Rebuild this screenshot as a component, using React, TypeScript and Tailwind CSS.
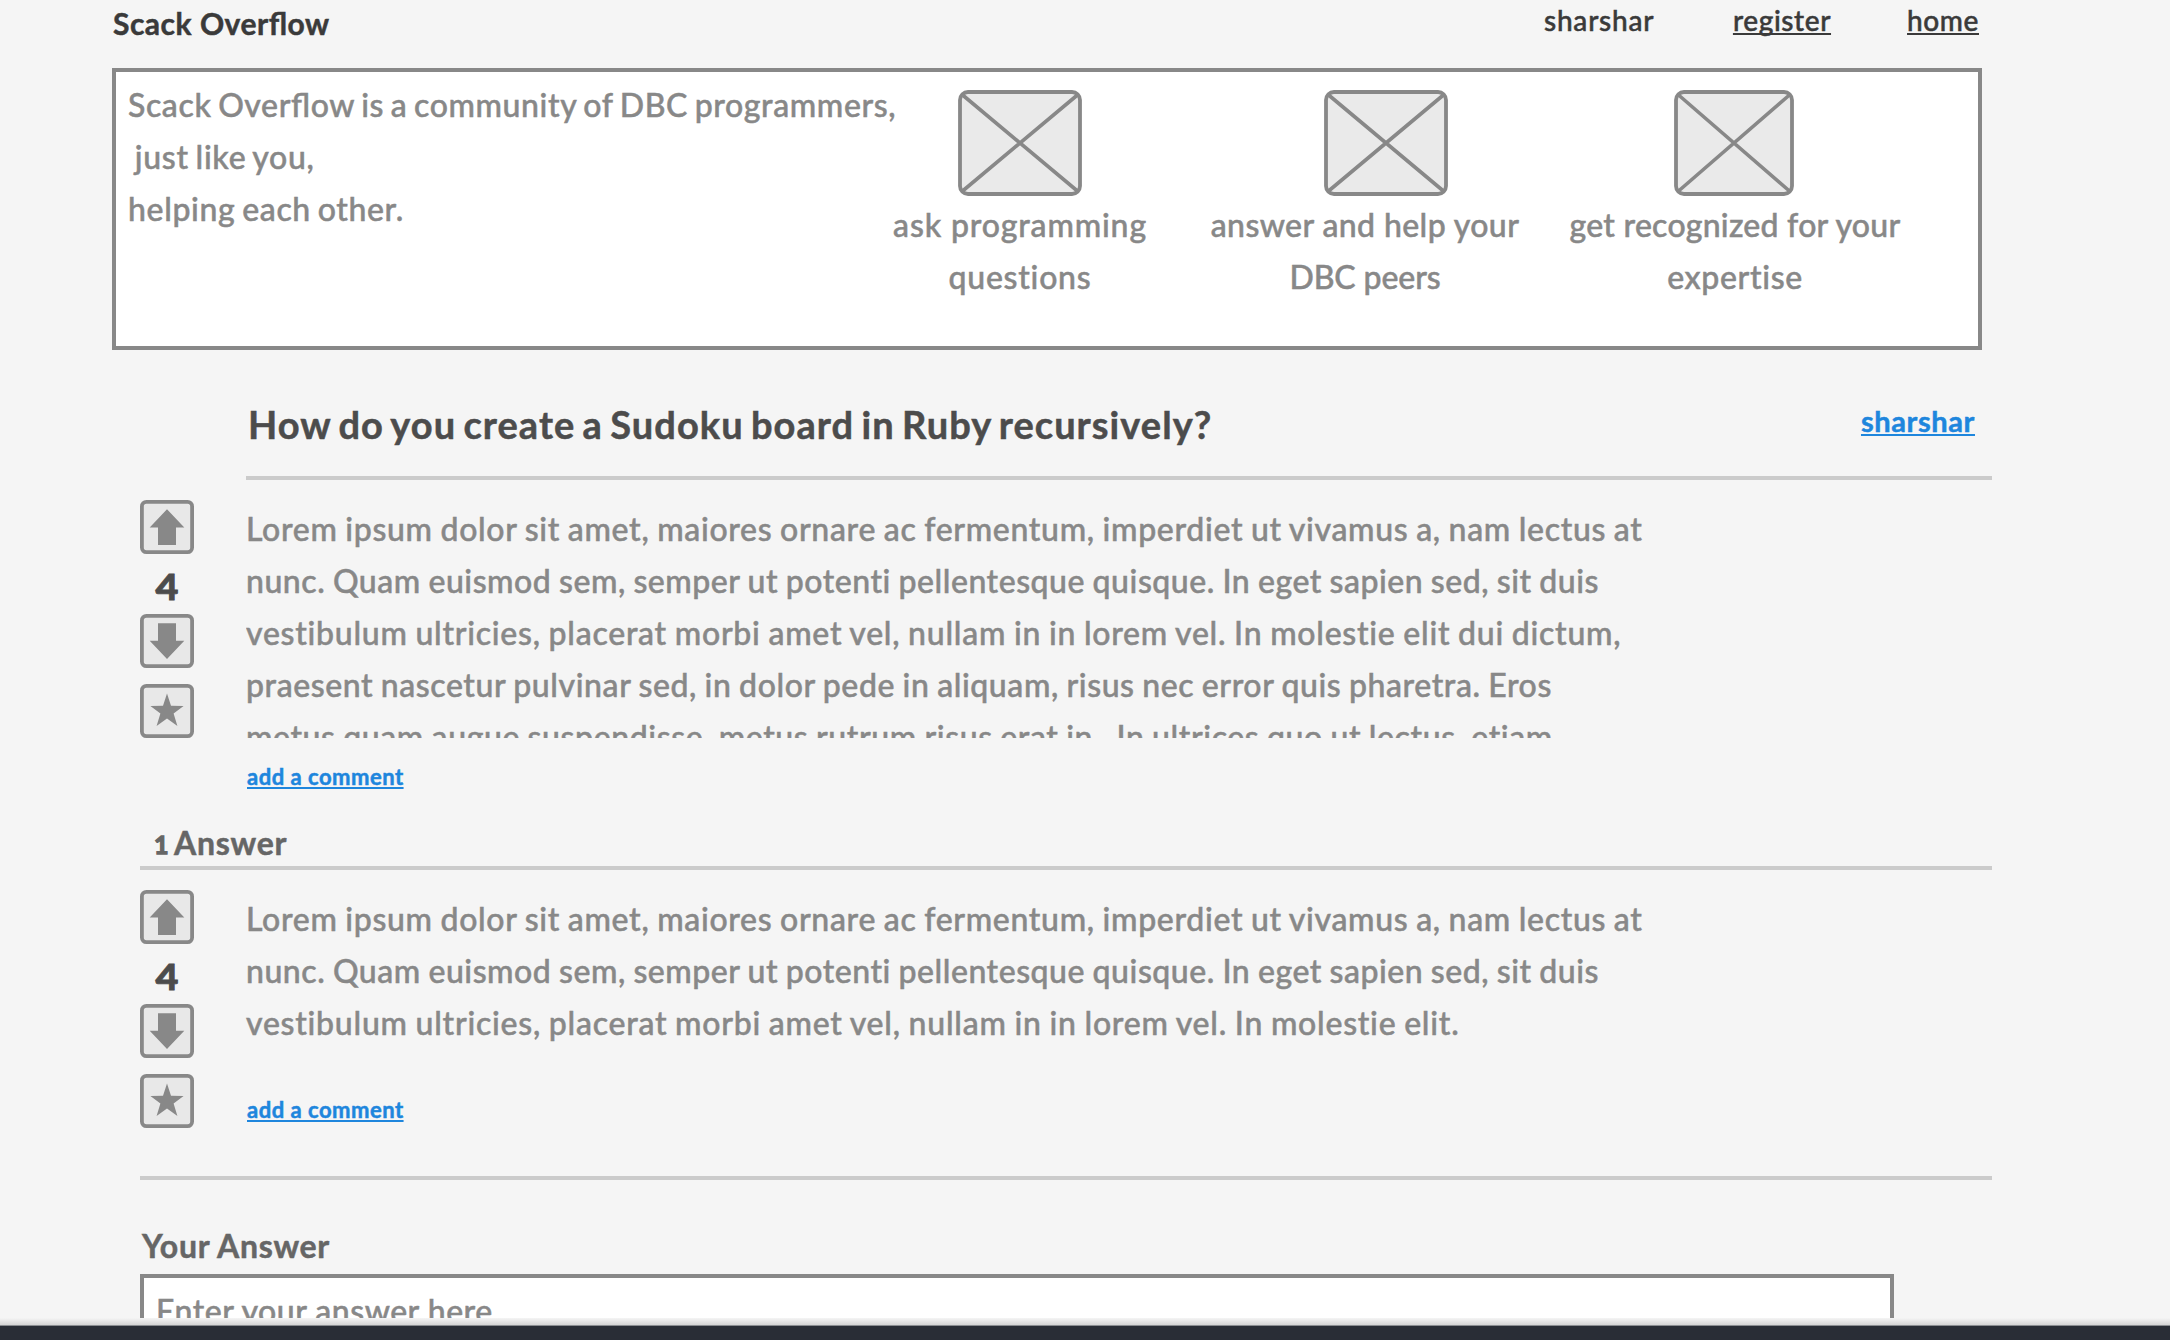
import type { ReactNode } from "react";

type Line = { text: string; spacing: string };

const questionLines: Line[] = [
  { text: "Lorem ipsum dolor sit amet, maiores ornare ac fermentum, imperdiet ut vivamus a, nam lectus at", spacing: "tracking-[0.68px]" },
  { text: "nunc. Quam euismod sem, semper ut potenti pellentesque quisque. In eget sapien sed, sit duis", spacing: "tracking-[0.54px]" },
  { text: "vestibulum ultricies, placerat morbi amet vel, nullam in in lorem vel. In molestie elit dui dictum,", spacing: "tracking-[0.74px]" },
  { text: "praesent nascetur pulvinar sed, in dolor pede in aliquam, risus nec error quis pharetra. Eros", spacing: "tracking-[0.58px]" },
  { text: "metus quam augue suspendisse, metus rutrum risus erat in.  In ultrices quo ut lectus, etiam", spacing: "tracking-[0.59px]" },
];

const answerLines: Line[] = [
  questionLines[0],
  questionLines[1],
  { text: "vestibulum ultricies, placerat morbi amet vel, nullam in in lorem vel. In molestie elit.", spacing: "tracking-[0.75px]" },
];

function Lines({ lines }: { lines: Line[] }) {
  return (
    <>
      {lines.map((l) => (
        <p key={l.text} className={`whitespace-pre ${l.spacing}`}>
          {l.text}
        </p>
      ))}
    </>
  );
}

function Placeholder({ width, className = "" }: { width: number; className?: string }) {
  const r = width - 2;
  return (
    <svg width={width} height="106" viewBox={`0 0 ${width} 106`} className={className} fill="none" stroke="#888888" strokeWidth="3.8">
      <rect x="2" y="2" width={width - 4} height="102" rx="8" fill="#eaeaea" />
      <path d={`M4 4.5 L${r - 2} 101.5 M${r - 2} 4.5 L4 101.5`} strokeWidth="3.6" />
    </svg>
  );
}

function Feature({ width, imageWidth, imageClass, lines }: { width: string; imageWidth: number; imageClass?: string; lines: Line[] }) {
  return (
    <div className={`flex shrink-0 flex-col items-center pt-[18px] whitespace-nowrap ${width}`}>
      <Placeholder width={imageWidth} className={imageClass} />
      <div className="mt-[3px] text-center">
        <Lines lines={lines} />
      </div>
    </div>
  );
}

function IconBox({ label, children }: { label: string; children: ReactNode }) {
  return (
    <button aria-label={label} className="block">
      <svg width="54" height="54" viewBox="0 0 54 54">
        <rect x="1.9" y="1.9" width="50.2" height="50.2" rx="4.5" fill="#e8e8e8" stroke="#888888" strokeWidth="3.8" />
        <g fill="#888888">{children}</g>
      </svg>
    </button>
  );
}

function Votes() {
  return (
    <div className="mt-5 flex w-[54px] shrink-0 flex-col">
      <IconBox label="Vote up">
        <path d="M27 9.2 L44.3 27.5 H36 V45 H18 V27.5 H9.7 Z" />
      </IconBox>
      <span className="h-[60px] scale-x-110 pt-[6px] text-center text-[36px] leading-[52px] font-black text-[#4c4c4c] [-webkit-text-stroke:0.8px]">4</span>
      <IconBox label="Vote down">
        <path d="M27 45 L44.3 26.8 H36 V9.2 H18 V26.8 H9.7 Z" />
      </IconBox>
      <div className="mt-4">
        <IconBox label="Favorite">
          <path d="M27 9.5 L31 21.7 L43.6 22 L33.6 29.6 L37.4 42 L27 34.6 L16.6 42 L20.4 29.6 L10.4 22 L23 21.7 Z" />
        </IconBox>
      </div>
    </div>
  );
}

const linkClass = "text-[#1e86dd] font-bold underline decoration-2 [text-decoration-skip-ink:none]";
const navLink = "underline decoration-2 underline-offset-[2px] [text-decoration-skip-ink:none]";

export default function App() {
  return (
    <div className="flex h-[1340px] w-[2170px] flex-col overflow-hidden bg-[#f5f5f5] font-[Lato,sans-serif] text-[32px] leading-[52px] font-medium text-[#888888] [-webkit-text-stroke:0.5px]">
      <div className="flex h-[1318px] shrink-0 flex-col overflow-hidden">
        <header className="ml-[113px] flex h-[68px] w-[1869px] shrink-0 justify-between text-[#3a3a3a]">
          <h1 className="pt-[5px] text-[30px] leading-9 font-bold tracking-[0.5px] [font-feature-settings:'liga']">Scack Overflow</h1>
          <nav className="flex pt-[2px] pr-[3px] text-[28px] leading-9">
            <span className="w-[189px] tracking-[0.8px]">sharshar</span>
            <a className="mr-[76px] tracking-[0.6px]"><span className={navLink}>register</span></a>
            <a className="tracking-[0.6px]"><span className={navLink}>home</span></a>
          </nav>
        </header>

        <section className="ml-[112px] flex h-[282px] w-[1870px] shrink-0 border-4 border-[#888888] bg-white">
          <div className="w-[764px] shrink-0 pt-[7px] pl-[12px] [font-feature-settings:'liga'] [word-spacing:-2px]">
            <Lines
              lines={[
                { text: "Scack Overflow is a community of DBC programmers,", spacing: "tracking-[0.61px]" },
                { text: " just like you,", spacing: "tracking-[0.7px]" },
                { text: "helping each other.", spacing: "tracking-[0.65px]" },
              ]}
            />
          </div>
          <Feature
            width="w-[280px]"
            imageWidth={124}
            lines={[
              { text: "ask programming", spacing: "tracking-[0.85px]" },
              { text: "questions", spacing: "tracking-[0.75px]" },
            ]}
          />
          <Feature
            width="w-[410px]"
            imageWidth={124}
            imageClass="relative left-[21px]"
            lines={[
              { text: "answer and help your", spacing: "tracking-[0.4px]" },
              { text: "DBC peers", spacing: "tracking-[-0.1px]" },
            ]}
          />
          <Feature
            width="w-[330px]"
            imageWidth={120}
            imageClass="relative -left-px"
            lines={[
              { text: "get recognized for your", spacing: "tracking-[0.25px]" },
              { text: "expertise", spacing: "tracking-[0.65px]" },
            ]}
          />
        </section>

        <div className="ml-[246px] flex h-[130px] w-[1746px] shrink-0 justify-between border-b-4 border-[#cbcbcb] pr-[17px] pl-[2px]">
          <h2 className="pt-[50px] text-[38px] leading-[48px] font-bold tracking-[1.06px] text-[#4c4c4c] [word-spacing:-3px]">
            How do you create a Sudoku board in Ruby recursively?
          </h2>
          <a className={`pt-[53px] text-[29px] leading-9 tracking-[0.6px] underline-offset-[2px] ${linkClass}`}>sharshar</a>
        </div>

        <section className="ml-[140px] flex h-[311px] shrink-0">
          <Votes />
          <div className="ml-[52px] flex flex-col">
            <div className="mt-[22px] h-[236px] shrink-0 overflow-hidden pt-px [word-spacing:-1px]">
              <Lines lines={questionLines} />
            </div>
            <a className={`mt-[25px] ml-px text-[22px] leading-7 tracking-[0.5px] underline-offset-[2px] ${linkClass}`}>add a comment</a>
          </div>
        </section>

        <h3 className="ml-[140px] flex h-[79px] w-[1852px] shrink-0 items-end border-b-4 border-[#cbcbcb] pb-[3px] pl-[14px] leading-10 font-bold tracking-[0.75px] text-[#666666]">
          <span className="w-5 text-[25px] leading-[38px] [-webkit-text-stroke:1.3px]">1</span>
          Answer
        </h3>

        <section className="ml-[140px] flex h-[310px] w-[1852px] shrink-0 border-b-4 border-[#cbcbcb]">
          <Votes />
          <div className="ml-[52px] flex flex-col">
            <div className="mt-[23px] [word-spacing:-1px]">
              <Lines lines={answerLines} />
            </div>
            <a className={`mt-[47px] ml-px text-[22px] leading-7 tracking-[0.5px] underline-offset-[2px] ${linkClass}`}>add a comment</a>
          </div>
        </section>

        <h3 className="mt-[46px] ml-[142px] h-[48px] shrink-0 leading-10 font-bold tracking-[0.7px] text-[#666666]">Your Answer</h3>
        <div className="ml-[140px] h-[200px] w-[1754px] shrink-0 border-4 border-[#888888] bg-white pt-[7px] pl-[12px] tracking-[0.5px]">
          Enter your answer here
        </div>
      </div>
      <div className="h-2 shrink-0 border-b border-[#8a8d91] bg-linear-to-b from-[#f5f5f5] to-[#d4d4d4]" />
      <div className="flex-1 bg-[#292d36]" />
    </div>
  );
}
